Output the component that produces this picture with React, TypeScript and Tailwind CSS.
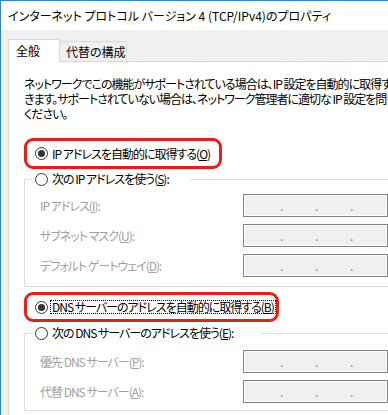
import React from "react";

const FONT = "font-['Noto_Sans_CJK_JP',sans-serif] [font-feature-settings:'palt']";

function Radio({ checked }: { checked?: boolean }) {
  return (
    <span className="flex h-[13px] w-[13px] shrink-0 items-center justify-center rounded-full border border-[#333333] bg-white">
      {checked && <span className="h-[7px] w-[7px] rounded-full bg-[#333333]" />}
    </span>
  );
}

function IpBox() {
  return (
    <div className="h-[23px] w-[145px] shrink-0 border border-[#838383] bg-white p-px">
      <div className="flex h-full items-center bg-[#f0f0f0] pl-[35px] text-[12px] leading-none text-[#8a8a8a]">
        <span className="w-[35px]">.</span>
        <span className="w-[35px]">.</span>
        <span className="w-[35px]">.</span>
      </div>
    </div>
  );
}

function Row({ label, k }: { label: string; k: string }) {
  return (
    <div className="flex h-[23px] items-center pl-[15px]">
      <div className="w-[203px] shrink-0 whitespace-nowrap tracking-[-1px] text-[#a0a0a0]">
        {label}(<span className="underline underline-offset-[1px]">{k}</span>):
      </div>
      <IpBox />
    </div>
  );
}

export default function App() {
  return (
    <div
      className={`${FONT} h-[415px] w-[388px] overflow-hidden border-l border-t border-[#2b88d8] bg-[#f0f0f0] text-[12px] text-black`}
    >
      {/* title bar */}
      <div className="flex h-[29px] items-center whitespace-nowrap bg-white pl-[7px]">
        インターネット プロトコル バージョン 4 (TCP/IPv4)のプロパティ
      </div>

      {/* tabs */}
      <div className="flex h-[31px] items-end pl-[7px]">
        <div className="relative z-10 -mb-px flex h-[23px] w-[52px] items-center border border-b-0 border-[#d9d9d9] bg-white pl-[7px]">
          全般
        </div>
        <div className="flex h-[20px] w-[67px] items-center border border-b-0 border-l-0 border-[#d9d9d9] bg-[#f0f0f0] pl-[6px]">
          代替の構成
        </div>
      </div>

      {/* panel */}
      <div className="ml-[7px] h-[400px] overflow-hidden border-l border-t border-[#d9d9d9] bg-white pl-[15px] pt-[14px]">
        <div className="leading-[15px] tracking-[-1px]">
          <div className="h-[15px] overflow-hidden whitespace-nowrap">
            ネットワークでこの機能がサポートされている場合は、IP 設定を自動的に取得することができます。
          </div>
          <div className="h-[15px] overflow-hidden whitespace-nowrap">
            きます。サポートされていない場合は、ネットワーク管理者に適切な IP 設定を問い合わせてください。
          </div>
          <div className="h-[15px] whitespace-nowrap">ください。</div>
        </div>

        {/* auto IP */}
        <div className="mt-[17px] flex h-[31px] w-[198px] items-center gap-[4px] rounded-[9px] border-[3px] border-[#e81f16] pl-[8px]">
          <Radio checked />
          <span className="whitespace-nowrap tracking-[-1px]">
            IP アドレスを自動的に取得する(<span className="underline underline-offset-[1px]">O</span>)
          </span>
        </div>

        {/* manual IP group */}
        <fieldset className="mt-[3px] w-[380px] border border-[#dcdcdc] pb-[9px]">
          <legend className="ml-[8px] flex h-[14px] w-[158px] items-center gap-[4px] pl-[2px]">
            <Radio />
            <span className="whitespace-nowrap tracking-[-1px]">
              次の IP アドレスを使う(<span className="underline underline-offset-[1px]">S</span>):
            </span>
          </legend>
          <div className="flex flex-col gap-[7px] pt-[8px]">
            <Row label="IP アドレス" k="I" />
            <Row label="サブネット マスク" k="U" />
            <Row label="デフォルト ゲートウェイ" k="D" />
          </div>
        </fieldset>

        {/* auto DNS */}
        <div className="mt-[5px] flex h-[30px] w-[255px] items-center gap-[2px] rounded-[9px] border-[3px] border-[#e81f16] pl-[8px]">
          <Radio checked />
          <span className="whitespace-nowrap border border-dotted border-black px-px leading-[12px] tracking-[-1px]">
            DNS サーバーのアドレスを自動的に取得する(<span className="underline underline-offset-[1px]">B</span>)
          </span>
        </div>

        {/* manual DNS group */}
        <fieldset className="mt-[4px] w-[380px] border border-[#dcdcdc] pb-[7px]">
          <legend className="ml-[8px] flex h-[14px] w-[229px] items-center gap-[4px] pl-[2px]">
            <Radio />
            <span className="whitespace-nowrap tracking-[-1px]">
              次の DNS サーバーのアドレスを使う(<span className="underline underline-offset-[1px]">E</span>):
            </span>
          </legend>
          <div className="flex flex-col gap-[7px] pt-[10px]">
            <Row label="優先 DNS サーバー" k="P" />
            <Row label="代替 DNS サーバー" k="A" />
          </div>
        </fieldset>
      </div>
    </div>
  );
}
